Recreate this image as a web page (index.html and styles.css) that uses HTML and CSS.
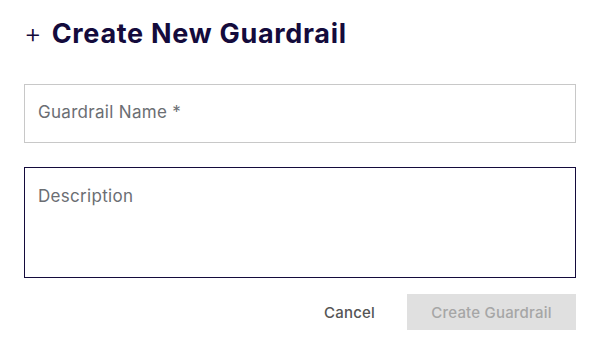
FILE: index.html
```html
<!DOCTYPE html>
<html lang="en">
<head>
  <meta charset="UTF-8">
  <meta name="viewport" content="width=device-width, initial-scale=1.0">
  <title>Create New Guardrail</title>
  <link rel="stylesheet" href="styles.css">
</head>
<body>
  <div class="dialog">
    <h1 class="titulo"><span class="mas">+</span> Create New Guardrail</h1>

    <form class="formulario">
      <input class="campo" type="text" placeholder="Guardrail Name *">
      <textarea class="campo area" placeholder="Description"></textarea>

      <div class="acciones">
        <button type="button" class="cancelar">Cancel</button>
        <button type="button" class="crear" disabled>Create Guardrail</button>
      </div>
    </form>
  </div>
</body>
</html>
```

FILE: styles.css
```css
* {
  margin: 0;
  padding: 0;
  box-sizing: border-box;
}

html, body {
  background: #fff;
  font-family: Inter, "Noto Sans", sans-serif;
}

.dialog {
  padding: 17px 24px 0 24px;
  width: 600px;
}

.titulo {
  font-size: 27px;
  line-height: 34px;
  font-weight: 700;
  letter-spacing: 0.7px;
  color: #140b3c;
  display: flex;
  align-items: center;
  gap: 10px;
  margin-bottom: 33px;
}

.titulo .mas {
  font-weight: 300;
  font-size: 27px;
  letter-spacing: 0;
}

.formulario {
  display: flex;
  flex-direction: column;
  gap: 24px;
}

.campo {
  width: 552px;
  height: 59px;
  border: 1px solid #c8c8c8;
  padding: 0 13px 3px 13px;
  font-family: Inter, "Noto Sans", sans-serif;
  font-size: 17px;
  letter-spacing: 0.3px;
  color: #333;
  outline: none;
}

.campo::placeholder {
  color: #6b6e73;
}

.area {
  height: 111px;
  border-color: #140b3c;
  padding: 18px 13px 16px 13px;
  resize: none;
}

.acciones {
  display: flex;
  justify-content: flex-end;
  align-items: center;
  gap: 32px;
  margin-top: -8px;
}

.cancelar {
  background: none;
  border: none;
  font-family: Inter, "Noto Sans", sans-serif;
  font-size: 15px;
  font-weight: 500;
  letter-spacing: 0.2px;
  color: #555;
}

.crear {
  width: 169px;
  height: 36px;
  background: #e0e0e0;
  border: none;
  font-family: Inter, "Noto Sans", sans-serif;
  font-size: 15px;
  font-weight: 500;
  letter-spacing: 0.2px;
  color: #a6a6a6;
}
```
